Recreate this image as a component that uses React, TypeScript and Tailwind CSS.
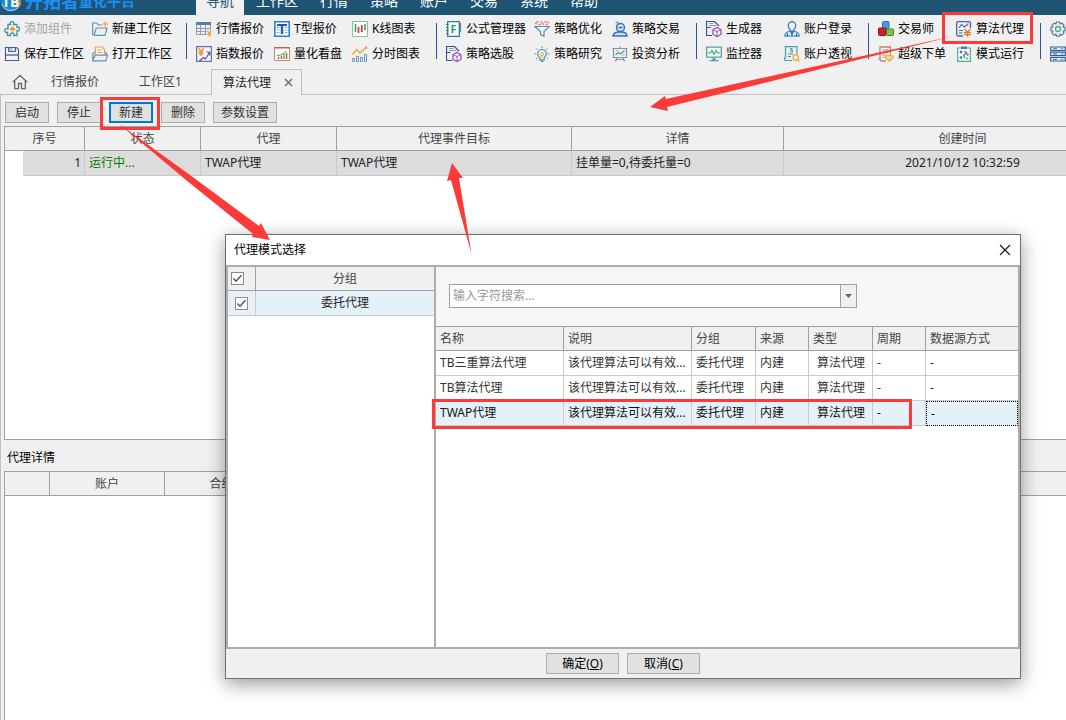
import React from "react";
import clsx from "clsx";

interface Tool {
  name: string;
  icon: React.ReactNode;
  disabled?: boolean;
}

interface ToolGroup {
  iconOnly?: boolean;
  // every column holds two stacked commands
  columns: { wide?: boolean; tools: Tool[] }[];
}

const Icon: React.FC<{ children: React.ReactNode }> = ({ children }) => (
  <svg width="16" height="16" viewBox="0 0 16 16" fill="none" className="shrink-0" aria-hidden="true">
    {children}
  </svg>
);

const PackageDocIcon = () => (
  <Icon>
    <path d="M6 14.500H.5v-14h8l4.500 4.500M.5 6.500h4" stroke="#3d4a94" strokeWidth="1.200" />
    <path d="M3 2.500h4.500M3 4.500h7.500" stroke="#7580b8" strokeWidth=".8" />
    <path d="M11 6.500l4 2v5l-4 2-4-2v-5z" stroke="#8a4fb0" strokeWidth="1.200" fill="#f7effb" />
    <path d="M7 8.500l4 2 4-2M11 10.500v5" stroke="#8a4fb0" strokeWidth=".9" />
  </Icon>
);

const groups: ToolGroup[] = [
  {
    columns: [
      {
        wide: true,
        tools: [
          {
            name: "添加组件",
            disabled: true,
            icon: (
              <Icon>
                <path
                  d="M4 3.500h2.500c-.8-1.500 0-2.800 1.500-2.800s2.300 1.300 1.500 2.800H13v3c1.500-.8 2.500 0 2.500 1.500S14.500 10.500 13 9.700v4.800h-3c.5-1.800-.5-2.500-1.700-2.500s-2.200.7-1.700 2.500H3.500v-3.300C2 12 .7 11 .7 9.500S2 7 4 7.800z"
                  stroke="#3b93a5"
                  strokeWidth="1.300"
                />
                <path d="M8.500 5.500v5M6 8h5" stroke="#f5921e" strokeWidth="1.800" />
              </Icon>
            ),
          },
          {
            name: "保存工作区",
            icon: (
              <Icon>
                <path d="M1.500 1.500h11l2 2v11h-13z" stroke="#465e88" strokeWidth="1.200" fill="#f2f5f9" />
                <path d="M2 8h12v2H2z" fill="#8292ae" />
                <path d="M4.500 1.500h7v4h-7z" fill="#a9c8e0" stroke="#465e88" />
                <path d="M9.500 2v3" stroke="#fff" strokeWidth="1.500" />
              </Icon>
            ),
          },
        ],
      },
      {
        wide: true,
        tools: [
          {
            name: "新建工作区",
            icon: (
              <Icon>
                <path d="M.7 14V2h4l1.500 2H10M2 14.300L4.200 7H15l-2 7.300zM14.300 7v4" stroke="#5d93b5" strokeWidth="1.200" />
                <path d="M13.300.5v5M10.800 3h5" stroke="#f0a15c" strokeWidth="1.300" />
              </Icon>
            ),
          },
          {
            name: "打开工作区",
            icon: (
              <Icon>
                <path d="M3.500 9V1h6.500l2.500 2.500V9" stroke="#e8a15f" strokeWidth="1.200" fill="#fdf3e8" />
                <path d="M5.500 4h4M5.500 6.500h5" stroke="#e8a15f" />
                <path d="M3 6L.8 7.500v7.300h13L15.500 9.200H3.200L.8 14.500M13 6l1.500 1.200v2" stroke="#5d93b5" strokeWidth="1.200" />
              </Icon>
            ),
          },
        ],
      },
    ],
  },
  {
    columns: [
      {
        tools: [
          {
            name: "行情报价",
            icon: (
              <Icon>
                <path d="M.5 1.500h14v12H.5z" fill="#eef2f7" stroke="#8a9ab2" />
                <path d="M0 1h15v3H0z" fill="#62799c" />
                <path d="M.5 7.500h14M.5 10.500h14M4.500 4v9M9.500 4v9" stroke="#8a9ab2" />
                <path d="M10.500 9h5.500v7h-5.500z" fill="#f0f0f0" />
                <path d="M11.300 9.300l2 2.700 2-2.700M13.300 12v3.500M11.300 12.500h4M11.300 14h4" stroke="#f5a01e" strokeWidth="1.100" />
              </Icon>
            ),
          },
          {
            name: "指数报价",
            icon: (
              <Icon>
                <path d="M.6.6h14.800v14.800H.6z" stroke="#6470b8" strokeWidth="1.200" fill="#f6f6fb" />
                <path d="M2.300 2l2.700 3.500L7.700 2M5 5v5M2.500 6h5M2.500 8h5" stroke="#f5921e" strokeWidth="1.300" />
                <path d="M3.500 15l4-3.500 2 1.500 4-6.500M10.500 6h3.200v3.500" stroke="#4854a4" strokeWidth="1.200" />
              </Icon>
            ),
          },
        ],
      },
      {
        tools: [
          {
            name: "T型报价",
            icon: (
              <Icon>
                <path d="M.8.8h14.400v14.400H.8z" stroke="#2a7fd8" strokeWidth="1.600" fill="#fff" />
                <path d="M2.500 6.500h3M10.500 6.500h3M2.500 9h3M10.500 9h3M2.500 11.500h3M10.500 11.500h3" stroke="#7fb2ea" />
                <path d="M3 3h10v2H3zM6.800 5h2.400v8H6.800z" fill="#2456b8" />
              </Icon>
            ),
          },
          {
            name: "量化看盘",
            icon: (
              <Icon>
                <path d="M.5 1.500h15v13H.5z" stroke="#b98c84" fill="#fbfbfb" />
                <path d="M0 1h16v1.500H0z" fill="#b06a5c" />
                <path d="M4.500 13v-2M7.500 13v-3M12.500 13V7" stroke="#e0443e" strokeWidth="1.300" />
                <path d="M10 13V8" stroke="#35a85a" strokeWidth="1.300" />
                <path d="M3 9.500c4 0 6-1.500 9.500-4.500" stroke="#35a85a" />
              </Icon>
            ),
          },
        ],
      },
      {
        tools: [
          {
            name: "K线图表",
            icon: (
              <Icon>
                <path d="M.5.500h15v15H.5z" stroke="#8bbfa0" fill="#fdfdfd" />
                <path d="M3.500 3v8M13 3v6" stroke="#2da44e" strokeWidth="1.500" />
                <path d="M6.500 6v6M9.800 4v7" stroke="#e5322d" strokeWidth="1.700" />
              </Icon>
            ),
          },
          {
            name: "分时图表",
            icon: (
              <Icon>
                <path d="M.5 15.500v-3h2v3zM4.500 15.500v-5h2v5zM8.500 15.500v-4h2v4zM12.500 15.500v-7h2v7z" stroke="#6f94b8" />
                <path d="M.5 8.500l4-5L8 7l6-5.500" stroke="#f0a640" strokeWidth="1.400" />
                <circle cx="14" cy="1.800" r="1.300" fill="#f0a640" />
              </Icon>
            ),
          },
        ],
      },
    ],
  },
  {
    columns: [
      {
        wide: true,
        tools: [
          {
            name: "公式管理器",
            icon: (
              <Icon>
                <path d="M1.700.7h11.600v14.600H1.700z" stroke="#2b7d9e" strokeWidth="1.300" fill="#fff" />
                <path d="M0 3.500h2.500M0 6.500h2.500M0 9.500h2.500M0 12.500h2.500" stroke="#2b7d9e" />
                <path d="M14.500 2v4" stroke="#e05050" strokeWidth="1.200" />
                <path d="M14.500 6v5" stroke="#2b9ed0" strokeWidth="1.200" />
                <text x="4.500" y="12" fontSize="11" fontWeight="700" fill="#2fa04c" fontFamily="Open Sans, sans-serif">
                  F
                </text>
              </Icon>
            ),
          },
          { name: "策略选股", icon: <PackageDocIcon /> },
        ],
      },
      {
        tools: [
          {
            name: "策略优化",
            icon: (
              <Icon>
                <path d="M.7 5.500h14.600L10 10.500V15l-3.500-1.500v-3z" stroke="#5b8fae" strokeWidth="1.200" fill="#eef6fa" />
                <path d="M1 2.500h2M4.500 3.500h2M8 3h2M11.500 3.500h2M2.500.8h2M6.500 1.200h2M10.500.8h2M13.500 1.500h1.500" stroke="#e8766c" strokeWidth="1.600" />
              </Icon>
            ),
          },
          {
            name: "策略研究",
            icon: (
              <Icon>
                <path d="M5.800 11.500C4 10.300 3.700 9 3.700 7.800a4.300 4.300 0 018.600 0c0 1.200-.4 2.500-2.100 3.700v2.300H5.800zM6.500 15.300h3" stroke="#5595a8" strokeWidth="1.200" />
                <path d="M8 .3v1.900M2.500 2.500l1.300 1.300M13.500 2.500l-1.300 1.300M.5 7.800h1.800M13.700 7.800h1.800M2 12.800l1.300-1.200M14 12.800l-1.300-1.200" stroke="#5595a8" />
                <path d="M8 6l2 2-2 2-2-2zM8 10v2" stroke="#f0a13c" />
              </Icon>
            ),
          },
        ],
      },
      {
        tools: [
          {
            name: "策略交易",
            icon: (
              <Icon>
                <path d="M3.500 1.200h3M4.500 3h2" stroke="#45bdf0" strokeWidth="1.400" />
                <circle cx="8.500" cy="6.500" r="4" stroke="#3f6db5" strokeWidth="1.500" fill="#dbe8f8" />
                <path d="M6.500 6.500h4" stroke="#3f6db5" strokeWidth="1.500" />
                <path d="M1 15c.5-2.800 2.500-3.800 5-4h4.500c2.500.2 4 1.200 4.500 4z" stroke="#3f6db5" strokeWidth="1.500" fill="#c9dcf4" />
              </Icon>
            ),
          },
          {
            name: "投资分析",
            icon: (
              <Icon>
                <path d="M.5 2.500h15M1.500 2.500v9h13v-9M8 .5v2M3.500 15.500l1.500-4M12.500 15.500l-1.500-4M4.500 13.500h7" stroke="#83929c" strokeWidth="1.200" />
                <path d="M3.500 9l3-2.500 2 1.500 4-3.500" stroke="#3aa0b0" strokeWidth="1.200" />
                <path d="M4 4.500h2.500M10 9h2.500" stroke="#f0a640" strokeWidth="1.200" />
              </Icon>
            ),
          },
        ],
      },
    ],
  },
  {
    columns: [
      {
        tools: [
          { name: "生成器", icon: <PackageDocIcon /> },
          {
            name: "监控器",
            icon: (
              <Icon>
                <path d="M.7 1.200h14.600v10H.7z" stroke="#5b9aa8" strokeWidth="1.300" fill="#f7fbfb" />
                <path d="M6.500 12h3v2h-3zM3.500 14h9v1.300h-9z" fill="#5b9aa8" />
                <path d="M2 7h2.500L6 4.500 8 8.500l2-4L11.500 7H14" stroke="#2fae6a" strokeWidth="1.100" />
              </Icon>
            ),
          },
        ],
      },
      {
        tools: [
          {
            name: "账户登录",
            icon: (
              <Icon>
                <path d="M4.300 4.500a3.700 3.700 0 017.400 0c0 2-1 3.500-2 4.300v1.400h-3.400V8.800c-1-.8-2-2.300-2-4.300z" stroke="#3f7fc0" strokeWidth="1.400" />
                <path d="M.8 15.200c0-3 1.500-4 5-5L8 13l2.200-2.800c3.500 1 5 2 5 5z" stroke="#3b8fd8" strokeWidth="1.300" fill="#e5f1fc" />
                <path d="M8 10.500v4M3.500 12.500v2.500M12.500 12.500v2.500" stroke="#274c80" strokeWidth="1.100" />
              </Icon>
            ),
          },
          {
            name: "账户透视",
            icon: (
              <Icon>
                <path d="M8 14.500H1.500c-.7 0-1-.5-1-1V12h1.800M1.500 12V.7h11.500V8" stroke="#4a9bb5" strokeWidth="1.200" />
                <path d="M8.500 2.500h-2v1.700h2V6h-2M4 8h5M4 10.500h3" stroke="#3f8fb0" />
                <circle cx="11.700" cy="11.500" r="2.700" stroke="#f0b040" strokeWidth="1.400" />
                <path d="M13.500 13.500l2 2" stroke="#f0b040" strokeWidth="1.500" />
              </Icon>
            ),
          },
        ],
      },
    ],
  },
  {
    columns: [
      {
        tools: [
          {
            name: "交易师",
            icon: (
              <Icon>
                <rect x="4.500" y=".5" width="6.500" height="7" rx="1" fill="#3f9fe0" stroke="#2a6da8" />
                <rect x=".5" y="7" width="7.500" height="7.500" rx="1" fill="#cc1f2c" stroke="#8e141e" />
                <rect x="8.500" y="8" width="7" height="6.500" rx="1" fill="#7fc842" stroke="#3f7f26" />
              </Icon>
            ),
          },
          {
            name: "超级下单",
            icon: (
              <Icon>
                <path d="M8 15H4c-1.500 0-2-1-2-2.500V1h10.500v7.500M2 13H.5" stroke="#bd8478" strokeWidth="1.300" />
                <path d="M4.500 4h6M4.500 6.500h6M4.500 9h3M4.500 11.500h2" stroke="#bd8478" />
                <path d="M8.500 9.500h5.500l1.500 1.700-4.200 4.100-4.200-4.100z" stroke="#f0a640" strokeWidth="1.200" fill="#fbd68f" />
              </Icon>
            ),
          },
        ],
      },
      {
        tools: [
          {
            name: "算法代理",
            icon: (
              <Icon>
                <path d="M7 15H2.500C1.300 15 .7 14.200.7 13V2c0-.8.500-1.300 1.300-1.300h11.200c.8 0 1.300.5 1.300 1.300v5" stroke="#4a62a8" strokeWidth="1.300" />
                <path d="M3 7l2.500-3.500L8.500 6l4-3.500M3 9.500h4M3 12h3.500" stroke="#4a62a8" strokeWidth="1.200" />
                <path d="M8.500 8l3 3.500 3-3.500M11.500 11v4.800M8 11.700h7M8 13.700h7" stroke="#e8742c" strokeWidth="1.300" />
              </Icon>
            ),
          },
          {
            name: "模式运行",
            icon: (
              <Icon>
                <path d="M1.700 2h12.600v13.300H1.700z" stroke="#4aa8a0" strokeWidth="1.200" fill="#fbfefe" />
                <path d="M5 .5h6v2.500H5z" fill="#5a7f98" />
                <path d="M4 5l2 2M6 5l-2 2M8.500 5l2 1.500-3 3L9 12" stroke="#3a6fa8" strokeWidth="1.200" />
                <circle cx="11.500" cy="8.500" r="1.200" fill="#e5524a" />
                <circle cx="5" cy="11.500" r="1.500" fill="#3aa860" />
                <circle cx="11" cy="12.500" r="1" fill="#3aa860" />
              </Icon>
            ),
          },
        ],
      },
    ],
  },
  {
    iconOnly: true,
    columns: [
      {
        tools: [
          {
            name: "设置",
            icon: (
              <Icon>
                <path
                  d="M6.500 1h3l.6 2 1.900-.9 2 2-.9 1.900 2 .6v3l-2 .6.9 1.900-2 2-1.900-.9-.6 2h-3l-.6-2-1.900.9-2-2 .9-1.900-2-.6v-3l2-.6L2 4.100l2-2 1.900.9z"
                  stroke="#567a94"
                  strokeWidth="1.200"
                  strokeLinejoin="round"
                />
                <circle cx="8" cy="8" r="2.500" stroke="#3fae78" strokeWidth="1.300" />
              </Icon>
            ),
          },
          {
            name: "服务器",
            icon: (
              <Icon>
                <path d="M.7 1h14.600v3.500H.7zM.7 6.200h14.600v3.500H.7zM.7 11.500h14.600V15H.7z" stroke="#2f5f98" strokeWidth="1.200" fill="#e6f0f9" />
                <path d="M3 2.800h4M3 8h4M3 13.300h4" stroke="#2f5f98" />
                <path d="M10.500 2.800h3M10.500 8h3M10.500 13.300h3" stroke="#3b9fe0" />
              </Icon>
            ),
          },
        ],
      },
    ],
  },
];

const menus = ["导航", "工作区", "行情", "策略", "账户", "交易", "系统", "帮助"];

const agentHeaders = ["序号", "状态", "代理", "代理事件目标", "详情", "创建时间"];

const modeHeaders = ["名称", "说明", "分组", "来源", "类型", "周期", "数据源方式"];

const modes = ["TB三重算法代理", "TB算法代理", "TWAP代理"];

const Header: React.FC = () => (
  <header className="flex h-[15px] items-end overflow-hidden bg-[#1f5475]">
    <div className="flex h-7 w-full shrink-0 items-center">
      <div className="flex w-[196px] shrink-0 items-center whitespace-nowrap text-[#1e90f5]">
        <svg width="22" height="22" viewBox="0 0 22 22" className="mr-[3px] shrink-0" aria-hidden="true">
          <circle cx="11" cy="11" r="10.500" fill="#1a86e0" />
          <path d="M2 14a9.500 9.500 0 0018 0" stroke="#a8d6fa" fill="none" />
          <path d="M16 4c5 1 5 5 1.500 6.500 3.500 1 3 5.500-2 6.500" stroke="#f08a24" strokeWidth="1.800" fill="none" />
          <text x="2" y="16.500" fontSize="14" fontWeight="700" fill="#fff" fontFamily="Open Sans, sans-serif">
            TB
          </text>
        </svg>
        <span className="text-lg leading-6 font-bold">开拓者</span>
        <span className="text-sm leading-6 font-bold">量化平台</span>
      </div>
      <nav className="flex h-full gap-[2px] text-sm text-white">
        {menus.map((menu, i) => (
          <a
            key={menu}
            href="#"
            className={clsx("flex h-full items-center px-[10px] leading-7 whitespace-nowrap", i === 0 && "bg-[#f0f0f0] text-[#1f5475]")}
          >
            {menu}
          </a>
        ))}
      </nav>
    </div>
  </header>
);

const Toolbar: React.FC = () => (
  <div className="flex overflow-hidden pt-px pl-1">
    {groups.map((group, i) => (
      <div key={i} className="flex shrink-0 items-center">
        {i > 0 && <div className="mr-[9px] ml-[6px] h-9 w-px bg-[#2b579a]" />}
        {group.columns.map((column, c) => (
          <div key={c} className={column.wide ? "w-[88px]" : "w-[78px]"}>
            {column.tools.map((tool) => (
              <button
                key={tool.name}
                disabled={tool.disabled}
                aria-label={tool.name}
                className="flex h-[25px] w-full items-center gap-1 whitespace-nowrap text-black disabled:text-[#a3a3a3]"
              >
                {tool.icon}
                {!group.iconOnly && tool.name}
              </button>
            ))}
          </div>
        ))}
      </div>
    ))}
  </div>
);

const TabBar: React.FC = () => (
  <div className="flex h-[29px] items-end text-[#444]">
    <button aria-label="主页" className="flex h-[26px] w-10 items-center border-b border-[#c0c0c0] pl-3">
      <Icon>
        <path d="M.7 8.300L8 1.300l7.300 7M2.700 7v7.700h3.800V9.500h3v5.200h3.800V7" stroke="#666" strokeWidth="1.300" />
      </Icon>
    </button>
    <button className="h-[26px] border-b border-[#c0c0c0] pr-[29px] pl-[11px]">行情报价</button>
    <button className="h-[26px] border-b border-[#c0c0c0] pr-[29px] pl-[11px]">工作区1</button>
    <div className="flex h-[26px] items-center border-x border-t border-[#c0c0c0] pr-2 pl-[11px] text-[#222]">
      <button className="mr-[13px]">算法代理</button>
      <button aria-label="关闭">
        <svg width="9" height="9" viewBox="0 0 9 9" aria-hidden="true">
          <path d="M1 1l7 7M8 1L1 8" stroke="#777" strokeWidth="1.700" />
        </svg>
      </button>
    </div>
    <div className="h-[26px] flex-1 border-b border-[#c0c0c0]" />
  </div>
);

const AgentTable: React.FC = () => (
  <table className="w-[1137px] table-fixed border-separate border-spacing-0">
    <colgroup>
      <col className="w-20" />
      <col className="w-[116px]" />
      <col className="w-[136px]" />
      <col className="w-[235px]" />
      <col className="w-[212px]" />
      <col />
    </colgroup>
    <thead>
      <tr className="h-6 bg-[#f0f0f0]">
        {agentHeaders.map((header) => (
          <th key={header} className="border-r border-b border-[#a0a0a0] p-0 font-normal text-[#444]">
            {header}
          </th>
        ))}
      </tr>
    </thead>
    <tbody className="text-[#222]">
      <tr className="h-[25px] bg-[#dcdcdc]">
        <td className="bg-white p-0">
          <div className="ml-[18px] h-[25px] border-r border-b border-[#cacaca] bg-[#dcdcdc] pr-[3px] text-right leading-6">1</div>
        </td>
        <td className="border-r border-b border-[#cacaca] px-1 py-0 text-[#008000]">运行中...</td>
        <td className="border-r border-b border-[#cacaca] px-1 py-0">TWAP代理</td>
        <td className="border-r border-b border-[#cacaca] px-1 py-0">TWAP代理</td>
        <td className="border-r border-b border-[#cacaca] px-1 py-0">挂单量=0,待委托量=0</td>
        <td className="border-r border-b border-[#cacaca] px-1 py-0 text-center">2021/10/12 10:32:59</td>
      </tr>
    </tbody>
  </table>
);

const DetailTable: React.FC = () => (
  <table className="w-full table-fixed border-separate border-spacing-0">
    <colgroup>
      <col className="w-[45px]" />
      <col className="w-[115px]" />
      <col className="w-[114px]" />
      <col />
    </colgroup>
    <thead>
      <tr className="h-6 bg-[#f0f0f0]">
        {["", "账户", "合约", ""].map((header, i) => (
          <th key={i} className="border-r border-b border-[#a0a0a0] p-0 font-normal text-[#444] last:border-r-0">
            {header}
          </th>
        ))}
      </tr>
    </thead>
  </table>
);

const CheckBox: React.FC<{ label: string }> = ({ label }) => (
  <label className="relative block size-[13px]">
    <input
      type="checkbox"
      defaultChecked
      aria-label={label}
      className="peer block size-[13px] appearance-none border border-[#8c8c8c] bg-white"
    />
    <svg width="13" height="13" viewBox="0 0 13 13" className="pointer-events-none absolute inset-0 hidden peer-checked:block" aria-hidden="true">
      <path d="M2.500 6.500L5 9.200l5.500-6" stroke="#555" strokeWidth="1.500" fill="none" />
    </svg>
  </label>
);

const ModeDialog: React.FC = () => (
  <div
    role="dialog"
    aria-label="代理模式选择"
    className="absolute top-[234px] left-[225px] w-[796px] border border-[#6f6f6f] bg-[#f0f0f0] shadow-[0_5px_18px_rgba(0,0,0,0.4)]"
  >
    <div className="flex h-[30px] items-center justify-between bg-white pr-[9px] pl-2 text-black">
      <h2>代理模式选择</h2>
      <button aria-label="关闭">
        <svg width="12" height="12" viewBox="0 0 12 12" aria-hidden="true">
          <path d="M1 1l10 10M11 1L1 11" stroke="#111" strokeWidth="1.100" />
        </svg>
      </button>
    </div>
    <div className="flex h-[384px] border-2 border-[#adadad] bg-white">
      <div className="w-52 shrink-0 border-r-2 border-[#adadad]">
        <table className="w-full table-fixed border-separate border-spacing-0">
          <colgroup>
            <col className="w-7" />
            <col />
          </colgroup>
          <thead>
            <tr className="h-6 bg-[#f0f0f0]">
              <th className="border-r border-b border-[#a0a0a0] p-0 pl-[3px]">
                <CheckBox label="全选" />
              </th>
              <th className="border-b border-[#a0a0a0] p-0 font-normal text-[#444]">分组</th>
            </tr>
          </thead>
          <tbody>
            <tr className="h-[25px] bg-[#e5f1f9]">
              <td className="border-r border-b border-[#cacaca] p-0 pl-[7px]">
                <CheckBox label="委托代理" />
              </td>
              <td className="border-b border-[#cacaca] p-0 text-center text-[#222]">委托代理</td>
            </tr>
          </tbody>
        </table>
      </div>
      <div className="min-w-0 flex-1">
        <div className="h-[60px] border-b border-[#a0a0a0] bg-[#f6f6f6] pt-[17px] pl-[13px]">
          <div className="flex h-6 w-[408px] border border-[#a0a0a0] bg-white">
            <input
              type="text"
              aria-label="搜索"
              placeholder="输入字符搜索..."
              className="min-w-0 flex-1 px-[3px] outline-none placeholder:text-[#999]"
            />
            <button aria-label="展开" className="flex w-4 items-center justify-center border-l border-[#a0a0a0] bg-[#f0f0f0]">
              <svg width="7" height="4" viewBox="0 0 7 4" aria-hidden="true">
                <path d="M0 0h7L3.500 4z" fill="#666" />
              </svg>
            </button>
          </div>
        </div>
        <table className="w-full table-fixed border-separate border-spacing-0 text-[#333]">
          <colgroup>
            <col className="w-32" />
            <col className="w-32" />
            <col className="w-16" />
            <col className="w-[53px]" />
            <col className="w-16" />
            <col className="w-[53px]" />
            <col />
          </colgroup>
          <thead>
            <tr className="h-6 bg-[#f0f0f0]">
              {modeHeaders.map((header) => (
                <th
                  key={header}
                  className="border-r border-b border-[#a0a0a0] px-1 py-0 text-left font-normal text-[#444] last:border-r-0"
                >
                  {header}
                </th>
              ))}
            </tr>
          </thead>
          <tbody>
            {modes.map((mode, i) => {
              const selected = i === modes.length - 1;
              const cell = "border-r border-b border-[#cacaca] py-0 whitespace-nowrap";
              return (
                <tr key={mode} className={clsx("h-[25px]", selected && "bg-[#e5f1f9] text-[#111]")}>
                  <td className={clsx(cell, "px-1")}>{mode}</td>
                  <td className={clsx(cell, "px-1")}>该代理算法可以有效...</td>
                  <td className={clsx(cell, "px-1")}>委托代理</td>
                  <td className={clsx(cell, "px-1")}>内建</td>
                  <td className={clsx(cell, "pr-0 pl-2")}>算法代理</td>
                  <td className={clsx(cell, "px-1")}>-</td>
                  <td className={clsx("px-1 py-0", selected ? "border border-dotted border-black" : "border-b border-[#cacaca]")}>-</td>
                </tr>
              );
            })}
          </tbody>
        </table>
      </div>
    </div>
    <div className="flex h-[29px] items-start justify-center gap-2 pt-1 text-black">
      <button className="h-[21px] w-[73px] border border-[#adadad] bg-[#e1e1e1]">
        确定(<u>O</u>)
      </button>
      <button className="h-[21px] w-[73px] border border-[#adadad] bg-[#e1e1e1]">
        取消(<u>C</u>)
      </button>
    </div>
  </div>
);

// Red frames and arrows that walk the user through the steps
const Annotations: React.FC = () => (
  <div className="pointer-events-none absolute inset-0 overflow-hidden" aria-hidden="true">
    <div className="absolute top-3 left-[942px] h-8 w-[91px] border-3 border-[#fb3a3a]" />
    <div className="absolute top-[97px] left-[100px] h-[33px] w-[60px] border-3 border-[#fb3a3a]" />
    <div className="absolute top-[399px] left-[432px] h-[30px] w-[480px] border-3 border-[#fb3a3a]" />
    <svg width="1066" height="720" viewBox="0 0 1066 720" className="absolute top-0 left-0" fill="#fb3a3a">
      <path d="M650 107L665 96L666 99L954 36L667 107L668 111Z" />
      <path d="M270 240L261 223L259 226L190 175L118 123L186 180L253 234L252 237Z" />
      <path d="M452 163L463 178L459 178L471.500 254L451 180L447 181Z" />
    </svg>
  </div>
);

const App: React.FC = () => {
  return (
    <div className="relative flex min-h-screen flex-col overflow-hidden bg-[#f0f0f0] font-['Noto_Sans','Noto_Sans_CJK_SC',sans-serif] text-xs leading-4">
      <Header />
      <Toolbar />
      <TabBar />
      <main className="flex flex-1 flex-col border-l border-[#c0c0c0] pl-[3px]">
        <div className="flex gap-2 pt-[7px] pb-[3px] pl-px text-[#333]">
          {["启动", "停止", "新建", "删除", "参数设置"].map((action) => (
            <button
              key={action}
              className={clsx(
                "h-[21px] bg-[#e1e1e1]",
                action === "参数设置" ? "w-16" : "w-11",
                action === "新建" ? "border-2 border-[#0078d7]" : "border border-[#adadad]"
              )}
            >
              {action}
            </button>
          ))}
        </div>
        <section className="h-[314px] overflow-hidden border-y border-l border-[#a0a0a0] bg-white">
          <AgentTable />
        </section>
        <h2 className="flex h-[31px] items-center pt-1 pl-[3px] text-black">代理详情</h2>
        <section className="flex-1 overflow-hidden border-t border-l border-[#a0a0a0] bg-white">
          <DetailTable />
        </section>
      </main>
      <ModeDialog />
      <Annotations />
    </div>
  );
};

export default App;
